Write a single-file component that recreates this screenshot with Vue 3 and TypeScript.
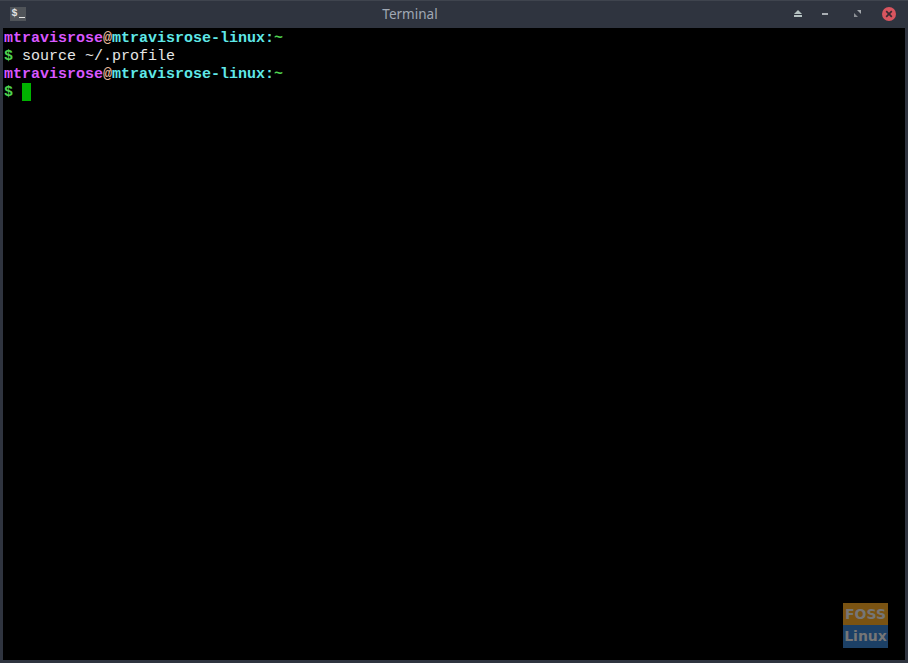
<script setup lang="ts">
interface Line { user?: boolean; command?: string; cursor?: boolean }
const lines: Line[] = [
  { user: true },
  { command: 'source ~/.profile' },
  { user: true },
  { cursor: true },
]
</script>

<template>
  <div class="window">
    <header class="titlebar">
      <div class="app-icon"><span class="dollar">$</span><span class="underscore"></span></div>
      <div class="title">Terminal</div>
      <div class="controls">
        <svg class="ctl eject" width="8" height="7" viewBox="0 0 8 7"><path d="M4 0 8 4H0Z" fill="#b5c2c2"/><rect y="5" width="8" height="2" fill="#b5c2c2"/></svg>
        <svg class="ctl min" width="6" height="2" viewBox="0 0 6 2"><rect width="6" height="2" fill="#a9aeb3"/></svg>
        <svg class="ctl max" width="7" height="7" viewBox="0 0 7 7"><path d="M3 0H7V4Z" fill="#a4a8ad"/><path d="M0 3V7H4Z" fill="#8b8f95"/></svg>
        <div class="close">
          <svg width="8" height="8" viewBox="0 0 8 8"><path d="M1.2 1.2 6.8 6.8M6.8 1.2 1.2 6.8" stroke="#3a2a32" stroke-width="1.7"/></svg>
        </div>
      </div>
    </header>
    <main class="terminal">
      <div v-for="(line, i) in lines" :key="i" class="line">
        <template v-if="line.user">
          <b class="magenta">mtravisrose</b><b class="peach">@</b><b class="cyan">mtravisrose-linux</b><b class="cyan">:</b><b class="green">~</b>
        </template>
        <template v-else>
          <b class="green">$</b><span class="plain">{{ ' ' + (line.command ?? '') }}</span><span v-if="line.cursor" class="cursor"></span>
        </template>
      </div>
      <div class="watermark">
        <div class="foss">FOSS</div>
        <div class="linux">Linux</div>
      </div>
    </main>
  </div>
</template>

<style scoped>
.window {
  width: 908px;
  height: 663px;
  box-sizing: border-box;
  display: flex;
  flex-direction: column;
  background: #2f343f;
  border-top: 1px solid #3f444e;
  padding: 0 3px 3px;
  overflow: hidden;
}
.titlebar {
  height: 27px;
  flex: none;
  display: flex;
  align-items: center;
  margin: 0 -3px;
  padding-left: 10px;
  font-family: "Noto Sans", sans-serif;
}
.app-icon {
  width: 16px;
  height: 14px;
  flex: none;
  margin-bottom: 1px;
  background: #505459;
  display: flex;
  align-items: center;
  justify-content: center;
  gap: 1px;
}
.dollar {
  font: bold 10px/14px "Liberation Mono", monospace;
  color: #e4e4e4;
}
.underscore {
  width: 6px;
  height: 1px;
  background: #e4e4e4;
  margin-top: 6px;
}
.title {
  flex: 1;
  text-align: center;
  font-size: 13.5px;
  line-height: 27px;
  color: #a0a8b4;
}
.controls {
  flex: none;
  width: 114px;
  margin-bottom: 2px;
  display: flex;
  align-items: center;
}
.ctl { display: block; flex: none; }
.eject { margin-right: 20px; }
.min { margin-right: 26px; }
.max { margin-right: 21px; }
.close {
  width: 14px;
  height: 14px;
  border-radius: 50%;
  background: #d9555f;
  display: flex;
  align-items: center;
  justify-content: center;
}
.terminal {
  flex: 1;
  position: relative;
  background: #000;
  padding-top: 2px;
  padding-left: 1px;
  font: 15px/18px "Liberation Mono", monospace;
}
.line {
  height: 18px;
  white-space: pre;
}
.line b { font-weight: bold; }
.magenta { color: #d957ff; }
.peach { color: #e8b89a; }
.cyan { color: #5fe8e8; }
.green { color: #4fd24f; }
.plain { color: #e6e6e6; }
.cursor {
  display: inline-block;
  width: 9px;
  height: 18px;
  margin-top: -1px;
  background: #00b300;
  vertical-align: top;
}
.watermark {
  position: absolute;
  right: 17px;
  bottom: 12px;
  width: 45px;
  font: bold 14px/22px "DejaVu Sans", sans-serif;
  text-align: center;
  color: #767676;
}
.foss { height: 22px; background: #7a5312; }
.linux { height: 23px; background: #1c4066; }
</style>
